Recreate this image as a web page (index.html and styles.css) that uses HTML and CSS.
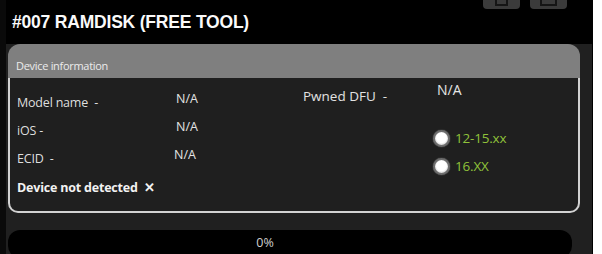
FILE: index.html
```html
<!DOCTYPE html>
<html>
<head>
<meta charset="utf-8">
<link rel="stylesheet" href="styles.css">
</head>
<body>
<div class="window">
  <div class="titlebar">
    <h1 class="title">#007 RAMDISK (FREE TOOL)</h1>
    <div class="winbtns">
      <span class="wbtn"><i class="ico"></i></span>
      <span class="wbtn"><i class="ico wide"></i></span>
    </div>
  </div>
  <div class="content">
    <section class="group">
      <div class="group-head">Device information</div>
      <div class="group-body">
        <div class="info">
          <span class="lbl">Model name&nbsp; -</span><span class="val">N/A</span>
          <span class="lbl">iOS -</span><span class="val">N/A</span>
          <span class="lbl">ECID&nbsp; -</span><span class="val val-ecid">N/A</span>
          <span class="lbl status">Device not detected <b class="x">✕</b></span>
        </div>
        <div class="side">
          <div class="dfu">
            <span class="dfu-lbl">Pwned DFU&nbsp; -</span>
            <span class="dfu-val">N/A</span>
          </div>
          <div class="radios">
            <label class="radio"><span class="dot"></span><span class="rtext">12-15.xx</span></label>
            <label class="radio"><span class="dot"></span><span class="rtext">16.XX</span></label>
          </div>
        </div>
      </div>
    </section>
    <div class="progress"><span class="pct">0%</span></div>
  </div>
</div>
</body>
</html>
```
FILE: styles.css
```css
html, body {
  margin: 0;
  padding: 0;
  background: #ffffff;
}
body {
  font-family: "Open Sans", "Noto Sans", sans-serif;
}
.window {
  width: 593px;
  height: 254px;
  box-sizing: border-box;
  background: #202020;
  border-left: 6px solid #0a0a0a;
  border-right: 1px solid #000;
  overflow: hidden;
  display: flex;
  flex-direction: column;
}
.titlebar {
  height: 44px;
  flex: none;
  background: #000;
  display: flex;
  justify-content: space-between;
  align-items: flex-start;
  padding: 0 25px 0 6px;
}
.title {
  margin: 0;
  padding-top: 12px;
  font-family: "Liberation Sans", Arial, sans-serif;
  font-weight: bold;
  font-size: 17.5px;
  line-height: 20px;
  color: #fafafa;
  letter-spacing: -0.2px;
}
.winbtns {
  display: flex;
  gap: 10px;
  margin-top: -6px;
}
.wbtn {
  width: 37px;
  height: 15px;
  border-radius: 4px;
  background: #3b3b3b;
  display: flex;
  justify-content: center;
  align-items: flex-start;
}
.ico {
  display: block;
  width: 9px;
  height: 8px;
  margin-top: 2px;
  border: 2px solid #151515;
  border-top: none;
}
.ico.wide {
  width: 13px;
}
.content {
  padding: 0 12px 0 2px;
}
.group {
  display: flex;
  flex-direction: column;
}
.group-head {
  height: 34px;
  box-sizing: border-box;
  background: #7f7f7f;
  border-radius: 12px 12px 0 0;
  padding: 14px 0 0 8px;
  font-size: 11px;
  line-height: 16px;
  color: #ececec;
  letter-spacing: -0.3px;
}
.group-body {
  height: 135px;
  box-sizing: border-box;
  background: #1f1f1f;
  border: 2px solid #d2d2d2;
  border-top: none;
  border-radius: 0 0 10px 10px;
  padding-left: 7px;
  display: flex;
}
.info {
  display: grid;
  grid-template-columns: 159px 127px;
  grid-auto-rows: 28px;
  align-items: start;
  padding-top: 11px;
  font-size: 12.5px;
  color: #dedede;
}
.lbl {
  line-height: 28px;
  letter-spacing: -0.2px;
}
.val {
  line-height: 20px;
  color: #e4e4e4;
}
.val-ecid {
  margin-left: -2px;
}
.status {
  grid-column: 1 / span 2;
  font-weight: bold;
  color: #f2f2f2;
}
.x {
  margin-left: 3px;
  font-size: 13px;
}
.side {
  padding-top: 4px;
  display: flex;
  flex-direction: column;
}
.dfu {
  display: flex;
  align-items: flex-start;
}
.dfu-lbl {
  width: 134px;
  line-height: 28px;
  font-size: 13.5px;
  color: #e2e2e2;
}
.dfu-val {
  line-height: 16px;
  font-size: 14px;
  color: #e6e6e6;
}
.radios {
  margin-top: 14px;
  margin-left: 130px;
  display: flex;
  flex-direction: column;
}
.radio {
  height: 28px;
  display: flex;
  align-items: center;
  gap: 5px;
}
.dot {
  width: 13px;
  height: 13px;
  border-radius: 50%;
  background: radial-gradient(circle at 50% 45%, #ffffff 0 50%, #e6e6e6 65%, #9a9a9a 100%);
  border: 2px solid #6d6d6d;
  box-shadow: 0 0 1px #aaa;
}
.rtext {
  font-size: 13.5px;
  color: #8fc23a;
  letter-spacing: -0.2px;
}
.progress {
  margin-top: 17px;
  width: 564px;
  height: 28px;
  background: #000;
  border-radius: 12px;
  box-sizing: border-box;
  padding: 4px 50px 0 0;
  text-align: center;
  font-size: 12.5px;
  line-height: 18px;
  color: #d0d0d0;
}
```
